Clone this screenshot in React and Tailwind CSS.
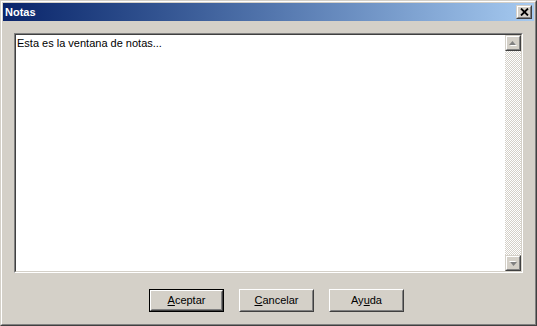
import React from 'react';

const font = { fontFamily: '"Liberation Sans", Arial, sans-serif' };

// Classic raised 3D frame (buttons)
function Raised({ className = '', children }) {
  return (
    <div className={`border border-t-white border-l-white border-r-[#404040] border-b-[#404040] ${className}`}>
      <div className="w-full h-full border border-t-[#d4d0c8] border-l-[#d4d0c8] border-r-[#808080] border-b-[#808080] flex items-center justify-center">
        {children}
      </div>
    </div>
  );
}

function Arrow({ down }) {
  return (
    <svg width="16" height="16" viewBox="0 0 16 16" className="block">
      <g transform={down ? 'translate(0,1) rotate(180 8 8)' : ''}>
        <polygon points="4,10 11,10 7.5,6" fill="#ffffff" transform="translate(1,1)" />
        <polygon points="4,10 11,10 7.5,6" fill="#808080" />
      </g>
    </svg>
  );
}

function ScrollArrow({ down }) {
  return (
    <div className="w-[16px] h-[16px] bg-[#d4d0c8] border border-t-[#d4d0c8] border-l-[#d4d0c8] border-r-[#404040] border-b-[#404040]">
      <div className="w-full h-full border border-t-white border-l-white border-r-[#808080] border-b-[#808080] relative overflow-hidden">
        <div className="absolute -left-[2px] -top-[2px]">
          <Arrow down={down} />
        </div>
      </div>
    </div>
  );
}

function PushButton({ label, def }) {
  const btn = (
    <Raised className={def ? 'w-full h-full bg-[#d4d0c8]' : 'w-[75px] h-[23px] bg-[#d4d0c8]'}>
      <span className="text-[11px] leading-[13px] text-black" style={font}>{label}</span>
    </Raised>
  );
  if (def) {
    return <div className="w-[75px] h-[23px] border border-black">{btn}</div>;
  }
  return btn;
}

export default function App() {
  return (
    <div className="w-[537px] h-[326px] bg-[#d4d0c8] border border-t-[#d4d0c8] border-l-[#d4d0c8] border-r-[#404040] border-b-[#404040]">
      <div className="w-full h-full border border-t-white border-l-white border-r-[#808080] border-b-[#808080] p-px flex flex-col">
        {/* Title bar */}
        <div className="h-[18px] flex items-center bg-gradient-to-r from-[#0a246a] to-[#a6caf0] pl-[2px] pr-[2px]">
          <span className="text-white font-bold text-[11px] leading-[13px] flex-1" style={font}>Notas</span>
          <div className="w-[16px] h-[14px] bg-[#d4d0c8] border border-t-[#d4d0c8] border-l-[#d4d0c8] border-r-[#404040] border-b-[#404040]">
            <div className="w-full h-full border border-t-white border-l-white border-r-[#808080] border-b-[#808080] flex items-center justify-center">
              <svg width="9" height="8" viewBox="0 0 9 8" className="block">
                <path d="M1 0.5L8 7.5M8 0.5L1 7.5" stroke="#000" strokeWidth="1.8" />
              </svg>
            </div>
          </div>
        </div>

        {/* Client area */}
        <div className="flex-1 flex flex-col px-[11px] pt-[12px] pb-[11px]">
          <div className="h-[240px] border border-t-[#808080] border-l-[#808080] border-r-white border-b-white">
            <div className="w-full h-full border border-t-[#404040] border-l-[#404040] border-r-[#d4d0c8] border-b-[#d4d0c8] bg-white flex">
              <div className="flex-1 pl-[1px] pt-[2px]">
                <p className="text-[11px] leading-[13px] text-black" style={font}>Esta es la ventana de notas...</p>
              </div>
              <div className="w-[16px] flex flex-col">
                <ScrollArrow />
                <div className="flex-1 bg-[repeating-conic-gradient(#d4d0c8_0%_25%,#ffffff_0%_50%)] bg-[length:2px_2px]" />
                <ScrollArrow down />
              </div>
            </div>
          </div>

          <div className="mt-[16px] flex gap-[15px] pl-[135px]">
            <PushButton def label={<><u>A</u>ceptar</>} />
            <PushButton label={<><u>C</u>ancelar</>} />
            <PushButton label={<>Ay<u>u</u>da</>} />
          </div>
        </div>
      </div>
    </div>
  );
}
